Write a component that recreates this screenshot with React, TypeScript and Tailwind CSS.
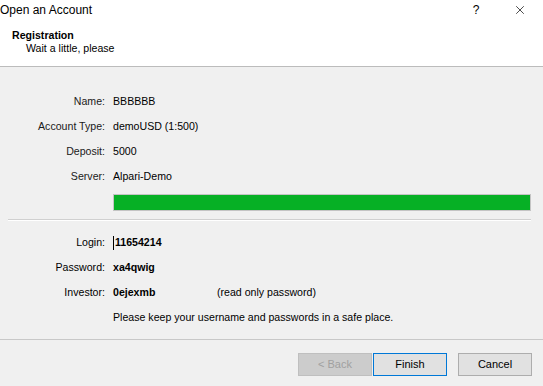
import { X } from "lucide-react";

const details = [
  { label: "Name:", value: "BBBBBB" },
  { label: "Account Type:", value: "demoUSD (1:500)" },
  { label: "Deposit:", value: "5000" },
  { label: "Server:", value: "Alpari-Demo" },
];

export default function App() {
  return (
    <div className="w-[543px] h-[386px] bg-[#f0f0f0] text-[10.6px] text-black font-['Liberation_Sans',Arial,sans-serif] flex flex-col overflow-hidden">
      {/* Header */}
      <div className="bg-white h-[67px] border-b border-[#bcbcbc] flex flex-col">
        <div className="h-[20px] flex items-center justify-between">
          <span className="text-[12px] leading-none">Open an Account</span>
          <div className="flex items-center">
            <span className="text-[12px] w-[74px] text-center pl-[2px]">?</span>
            <X className="w-[14px] h-[14px] mr-[16px] ml-[1px]" strokeWidth={1.2} />
          </div>
        </div>
        <div className="pl-[12px] pt-[9px] leading-[13px]">
          <div className="font-bold">Registration</div>
          <div className="pl-[14px]">Wait a little, please</div>
        </div>
      </div>

      {/* Account info */}
      <div className="pt-[22px] px-[8px]">
        <div className="grid grid-cols-[97px_1fr] gap-x-[8px]">
          {details.map((d) => (
            <div key={d.label} className="contents">
              <div className="h-[25px] flex items-center justify-end text-[#1a1a1a]">{d.label}</div>
              <div className="h-[25px] flex items-center">{d.value}</div>
            </div>
          ))}
        </div>
        <div className="ml-[105px] mr-[4px] mt-[5px] h-[17px] border border-[#c4c4c4] bg-[#06b025]" />
        <div className="mt-[8px] mr-[4px] border-t border-[#d0d0d0] border-b border-b-white" />

        <div className="grid grid-cols-[97px_1fr] gap-x-[8px] mt-[9px]">
          <div className="h-[25px] flex items-center justify-end">Login:</div>
          <div className="h-[25px] flex items-center font-bold">
            <span className="w-[1px] h-[14px] bg-black mr-[1px]" />
            11654214
          </div>
          <div className="h-[25px] flex items-center justify-end">Password:</div>
          <div className="h-[25px] flex items-center font-bold">xa4qwig</div>
          <div className="h-[25px] flex items-center justify-end">Investor:</div>
          <div className="h-[25px] flex items-center">
            <span className="font-bold w-[104px]">0ejexmb</span>
            <span>(read only password)</span>
          </div>
          <div />
          <div className="h-[25px] flex items-center">Please keep your username and passwords in a safe place.</div>
        </div>
      </div>

      {/* Footer */}
      <div className="mt-[9px] border-t border-[#c8c8c8] flex justify-end pt-[13px] pr-[11px] text-[11px]">
        <button className="w-[74px] h-[23px] bg-[#cccccc] border border-[#bfbfbf] text-[#a0a0a0]">&lt; Back</button>
        <button className="w-[74px] h-[23px] ml-[1px] bg-[#e1e1e1] border border-[#0078d7]">Finish</button>
        <button className="w-[74px] h-[23px] ml-[11px] bg-[#e1e1e1] border border-[#adadad]">Cancel</button>
      </div>
    </div>
  );
}
